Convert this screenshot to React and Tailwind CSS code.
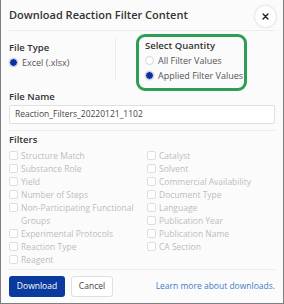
import React from "react";

const left = [
  "Structure Match",
  "Substance Role",
  "Yield",
  "Number of Steps",
  "Non-Participating Functional Groups",
  "Experimental Protocols",
  "Reaction Type",
  "Reagent",
];
const right = [
  "Catalyst",
  "Solvent",
  "Commercial Availability",
  "Document Type",
  "Language",
  "Publication Year",
  "Publication Name",
  "CA Section",
];

function Check({ label }) {
  return (
    <div className="flex items-start gap-[3px]">
      <span className="mt-[2px] w-[9px] h-[9px] shrink-0 rounded-[2px] border border-[#dedede] bg-white" />
      <span className="text-[#bdbdbd]">{label}</span>
    </div>
  );
}

function Radio({ checked, label }) {
  return (
    <div className="flex items-center gap-[4px] h-[15px]">
      {checked ? (
        <span className="w-[9px] h-[9px] rounded-full bg-[#0b2f9c] border border-[#e6e9f5] shadow-[0_0_0_1px_#f0f0f0]" />
      ) : (
        <span className="w-[9px] h-[9px] rounded-full bg-white border border-[#d6d6d6]" />
      )}
      <span className="text-[#555]">{label}</span>
    </div>
  );
}

export default function App() {
  return (
    <div
      className="w-[284px] h-[304px] bg-[#fbfbfb] border-x border-b border-[#7f7f7f] border-t-[#c8c8c8] px-[8px] text-[9px] overflow-hidden"
      style={{ fontFamily: '"Open Sans", "Noto Sans", sans-serif' }}
    >
      <div className="flex items-center justify-between h-[31px] pt-[1px] border-b border-[#ececec]">
        <div className="text-[11px] font-semibold text-[#333]">
          Download Reaction Filter Content
        </div>
        <div className="w-[21px] h-[21px] rounded-full bg-white shadow-[0_0_3px_rgba(0,0,0,0.2)] flex items-center justify-center mr-[-1px] mt-[1px]">
          <svg width="7" height="7" viewBox="0 0 10 10">
            <path d="M1.5 1.5 L8.5 8.5 M8.5 1.5 L1.5 8.5" stroke="#222" strokeWidth="2" strokeLinecap="round" />
          </svg>
        </div>
      </div>

      <div className="flex mt-[3px]">
        <div className="w-[106px] pt-[5px] border-r border-[#ececec] h-[38px] mt-[3px] box-content pb-[0px]">
          <div className="text-[9.5px] font-semibold text-[#333] leading-[13px] -mt-[1px]">File Type</div>
          <div className="mt-[1px]">
            <Radio checked label="Excel (.xlsx)" />
          </div>
        </div>
        <div className="ml-[20px] w-[111px] h-[57px] border-[3px] border-[#2f9e55] rounded-[9px] pl-[6px] pt-[2px]">
          <div className="text-[9.5px] font-semibold text-[#333] leading-[13px]">Select Quantity</div>
          <div className="mt-[1px]">
            <Radio label="All Filter Values" />
            <Radio checked label="Applied Filter Values" />
          </div>
        </div>
      </div>

      <div className="text-[9.5px] font-semibold text-[#333] leading-[13px] mt-[-1px]">File Name</div>
      <div className="mt-[2px] h-[19px] bg-white border border-[#e0e0e0] rounded-[2px] flex items-center pl-[5px] text-[8.5px] text-[#444]">
        Reaction_Filters_20220121_1102
      </div>
      <div className="mt-[6px] border-t border-[#ececec]" />

      <div className="text-[9.5px] font-semibold text-[#333] leading-[13px] mt-[2px]">Filters</div>
      <div className="grid grid-cols-[138px_1fr] mt-[3px] leading-[13px] text-[8.5px]">
        <div className="flex flex-col">
          {left.map((l) => (
            <Check key={l} label={l} />
          ))}
        </div>
        <div className="flex flex-col">
          {right.map((l) => (
            <Check key={l} label={l} />
          ))}
        </div>
      </div>

      <div className="mt-[3px] border-t border-[#ececec]" />
      <div className="flex items-center mt-[6px]">
        <button className="w-[56px] h-[21px] rounded-[3px] bg-[#0b3a9e] text-white text-[8.5px]">Download</button>
        <button className="ml-[6px] w-[42px] h-[21px] rounded-[3px] bg-white border border-[#e0e0e0] text-[#444] text-[8.5px]">Cancel</button>
        <span className="ml-auto text-[8.5px] text-[#3d7cc6]">Learn more about downloads.</span>
      </div>
    </div>
  );
}
